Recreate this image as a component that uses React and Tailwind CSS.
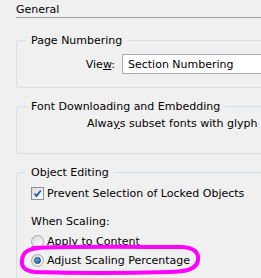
function Checkbox() {
  return (
    <span className="relative flex h-[13px] w-[13px] shrink-0 items-center justify-center border border-[#8e8f8f] bg-gradient-to-br from-[#dcdcd7] to-[#ffffff]">
      <svg viewBox="0 0 11 11" className="h-[11px] w-[11px]">
        <path d="M2.5 5.5 L4.5 8 L8.8 2.5" fill="none" stroke="#2154c8" strokeWidth="1.8" />
      </svg>
    </span>
  );
}

function Radio({ checked }) {
  return (
    <span className="flex h-[13px] w-[13px] shrink-0 items-center justify-center rounded-full border border-[#a9a9a9] bg-gradient-to-br from-[#d8d8d8] to-[#ffffff]">
      {checked && (
        <span className="h-[7px] w-[7px] rounded-full border border-[#1c3a5c] bg-gradient-to-br from-[#6ec2ff] to-[#0a5fb0]" />
      )}
    </span>
  );
}

function Group({ title, className, children }) {
  return (
    <fieldset className={`rounded-[3px] border border-[#d5dfe5] ${className}`}>
      <legend className="ml-[9px] px-[5px] leading-[13px]">{title}</legend>
      {children}
    </fieldset>
  );
}

export default function App() {
  return (
    <div className="relative h-[278px] w-[261px] overflow-hidden bg-[#f0f0f0] font-['DejaVu_Sans',sans-serif] text-[11px] leading-[13px] text-black">
      <div className="w-[330px] pl-4">
        <div className="h-[18px] border-b border-[#a0a0a0] pt-[3px]">General</div>

        <Group title="Page Numbering" className="mt-[16px] pb-[13px]">
          <div className="mt-[7px] flex items-center gap-[7px]">
            <span className="w-[98px] text-right">
              Vie<span className="underline">w</span>:
            </span>
            <div className="flex h-[20px] flex-1 items-center border border-[#a5acb2] bg-white pl-[5px]">
              Section Numbering
            </div>
          </div>
        </Group>

        <Group title="Font Downloading and Embedding" className="mt-[12px] pb-[23px]">
          <p className="mt-[4px] pl-[70px]">
            Alwa<span className="underline">y</span>s subset fonts with glyph
          </p>
        </Group>

        <Group title="Object Editing" className="mt-[12px] h-[115px]">
          <div className="pl-[14px]">
            <label className="mt-[6px] flex h-[16px] items-center gap-[3px]">
              <Checkbox />
              <span>Prevent Selection of Locked Objects</span>
            </label>
            <p className="mt-[14px]">When Scaling:</p>
            <label className="mt-[7px] flex h-[13px] items-center gap-[3px]">
              <Radio />
              <span>Apply to Content</span>
            </label>
            <label className="mt-[6px] flex h-[13px] items-center gap-[3px]">
              <Radio checked />
              <span>Adjust Scaling Percentage</span>
            </label>
          </div>
        </Group>
      </div>

      <svg className="pointer-events-none absolute left-[19px] top-[243px] h-[33px] w-[182px]" viewBox="0 0 182 33">
        <path
          d="M14 5 C50 3 120 4 160 4 C176 4 180 10 179 17 C178 26 168 29 150 29 C110 30 50 30 16 29 C6 28 2 24 3 17 C4 9 9 6 20 5"
          fill="none"
          stroke="#ff00ff"
          strokeWidth="4"
          strokeLinecap="round"
        />
      </svg>
    </div>
  );
}
